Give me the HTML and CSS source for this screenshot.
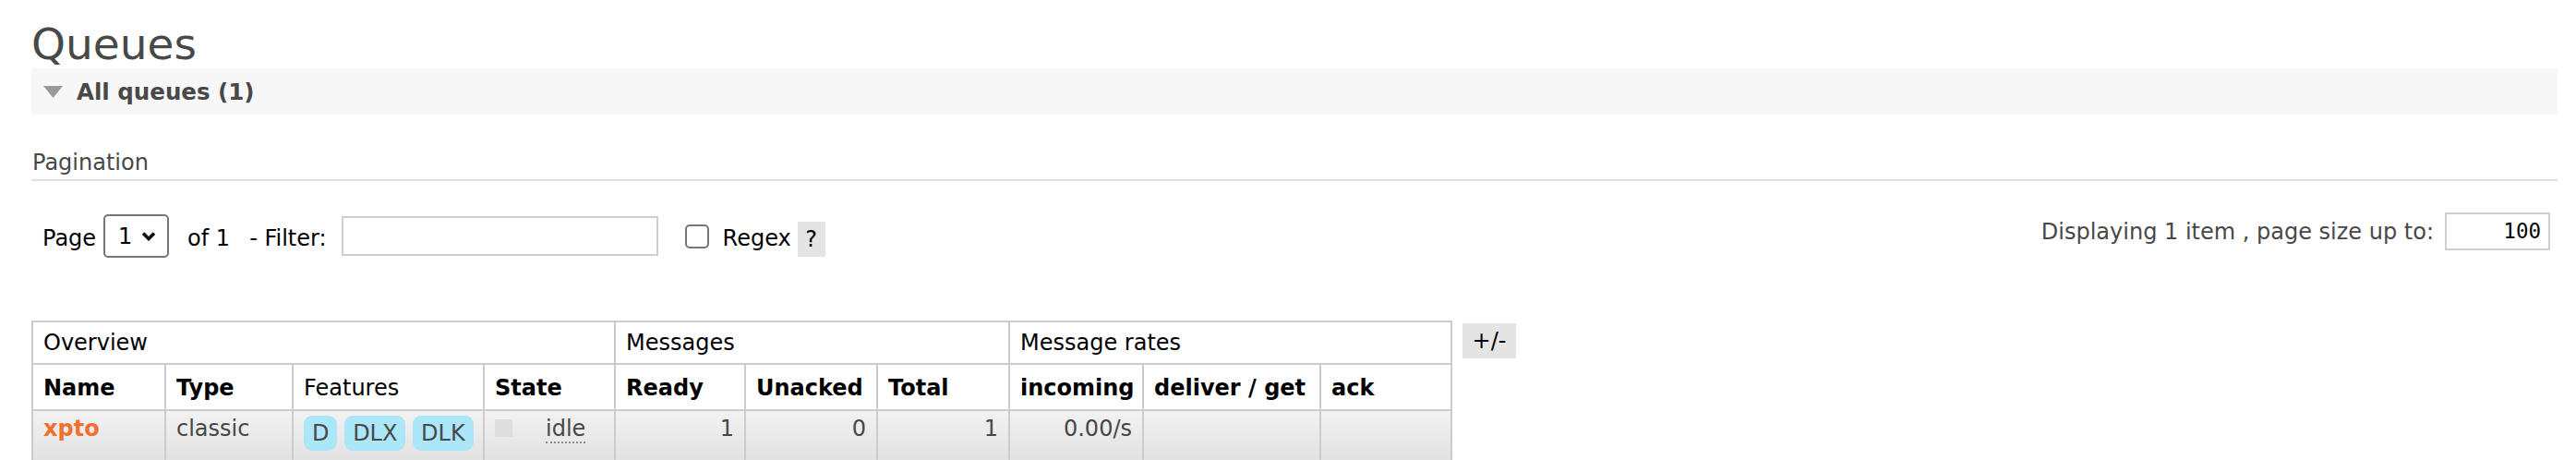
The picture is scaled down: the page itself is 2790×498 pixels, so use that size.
FILE: index.html
```html
<!DOCTYPE html>
<html>
<head>
<meta charset="utf-8">
<link rel="stylesheet" href="styles.css">
</head>
<body>
<h1 class="title">Queues</h1>
<div class="section-head">
  <svg class="tri" width="21" height="13" viewBox="0 0 21 13"><polygon points="0,0 21,0 10.5,13" fill="#999"/></svg>
  <span class="section-title">All queues (1)</span>
</div>
<h3 class="sub">Pagination</h3>
<div class="pager">
  <div class="pager-left">
    <span class="lbl">Page</span>
    <span class="select">1<svg class="chev" width="16" height="11" viewBox="0 0 16 11"><polyline points="2,2.5 8,8.5 14,2.5" fill="none" stroke="#111" stroke-width="3.6"/></svg></span>
    <span class="lbl of">of 1</span>
    <span class="lbl dash">- Filter:</span>
    <span class="filter"></span>
    <span class="check"></span>
    <span class="lbl regex">Regex</span>
    <span class="help">?</span>
  </div>
  <div class="pager-right">
    <span class="disp">Displaying 1 item , page size up to:</span>
    <span class="size">100</span>
  </div>
</div>
<div class="table-wrap">
  <table class="list">
    <colgroup>
      <col class="c-name"><col class="c-type"><col class="c-feat"><col class="c-state">
      <col class="c-ready"><col class="c-unack"><col class="c-total">
      <col class="c-in"><col class="c-del"><col class="c-ack">
    </colgroup>
    <thead>
      <tr class="group">
        <th colspan="4">Overview</th>
        <th colspan="3">Messages</th>
        <th colspan="3">Message rates</th>
      </tr>
      <tr class="cols">
        <th>Name</th><th>Type</th><th class="plain">Features</th><th>State</th>
        <th>Ready</th><th>Unacked</th><th>Total</th>
        <th>incoming</th><th>deliver / get</th><th>ack</th>
      </tr>
    </thead>
    <tbody>
      <tr class="alt">
        <td><a class="qname">xpto</a></td>
        <td>classic</td>
        <td class="feat"><span class="tag">D</span> <span class="tag">DLX</span> <span class="tag">DLK</span></td>
        <td class="state"><span class="sq"></span><abbr class="idle">idle</abbr></td>
        <td class="r">1</td>
        <td class="r">0</td>
        <td class="r">1</td>
        <td class="r">0.00/s</td>
        <td></td>
        <td></td>
      </tr>
    </tbody>
  </table>
  <span class="toggle">+/-</span>
</div>
</body>
</html>
```
FILE: styles.css
```css
html, body {
  margin: 0;
  background: #fff;
}
body {
  padding: 0 20px 0 34px;
  font-family: "DejaVu Sans", Verdana, sans-serif;
  font-size: 24px;
  color: #484848;
}
.title {
  margin: 0;
  padding-top: 22px;
  height: 52px;
  line-height: 52px;
  font-size: 47px;
  font-weight: normal;
  color: #484848;
}
.section-head {
  height: 50px;
  background: #f7f7f7;
  display: flex;
  align-items: center;
  padding-left: 13px;
}
.tri {
  display: block;
  margin-right: 15px;
  margin-top: 1px;
}
.section-title {
  font-weight: bold;
  font-size: 24.5px;
  color: #484848;
}
.sub {
  margin: 39px 0 0 0;
  padding: 0 0 5px 1px;
  font-size: 24px;
  font-weight: normal;
  line-height: 26px;
  border-bottom: 2px solid #e0e0e0;
  color: #484848;
}
.pager {
  display: flex;
  justify-content: space-between;
  align-items: flex-start;
  padding-top: 36px;
}
.pager-left {
  display: flex;
  align-items: center;
  padding-left: 12px;
  color: #000;
}
.lbl {
  line-height: 26px;
  padding-top: 4px;
}
.select {
  display: flex;
  align-items: center;
  box-sizing: border-box;
  width: 71px;
  height: 47px;
  margin-left: 8px;
  border: 2px solid #767676;
  border-radius: 5px;
  padding-left: 14px;
  color: #000;
}
.chev {
  margin-left: 10px;
}
.of {
  margin-left: 20px;
}
.dash {
  margin-left: 21px;
}
.filter {
  box-sizing: border-box;
  width: 343px;
  height: 43px;
  margin-left: 16px;
  border: 2px solid #cfcfcf;
  background: #fff;
}
.check {
  box-sizing: border-box;
  width: 26px;
  height: 26px;
  margin-left: 29px;
  border: 2px solid #767676;
  border-radius: 5px;
}
.regex {
  margin-left: 15px;
}
.help {
  box-sizing: border-box;
  width: 30px;
  height: 38px;
  margin-left: 7px;
  margin-top: 6px;
  background: #e4e4e4;
  text-align: center;
  line-height: 38px;
  color: #000;
}
.pager-right {
  display: flex;
  align-items: center;
  padding-right: 8px;
  margin-top: -2px;
}
.disp {
  color: #484848;
  margin-right: 12px;
}
.size {
  box-sizing: border-box;
  width: 114px;
  height: 41px;
  border: 2px solid #cfcfcf;
  font-family: "DejaVu Sans Mono", monospace;
  font-size: 22.5px;
  line-height: 37px;
  text-align: right;
  padding-right: 8px;
  color: #000;
}
.table-wrap {
  display: flex;
  align-items: flex-start;
  margin-top: 68px;
}
.list {
  border-collapse: collapse;
  table-layout: fixed;
  width: 1537px;
}
.c-name { width: 144px; }
.c-type { width: 138px; }
.c-feat { width: 207px; }
.c-state { width: 142px; }
.c-ready { width: 141px; }
.c-unack { width: 143px; }
.c-total { width: 143px; }
.c-in { width: 145px; }
.c-del { width: 192px; }
.c-ack { width: 142px; }
.list th, .list td {
  border: 2px solid #cccccc;
  padding: 0 11px;
  text-align: left;
  line-height: 26px;
  white-space: nowrap;
  overflow: hidden;
}
.list th {
  color: #000;
  background: #fff;
}
.group th {
  font-weight: normal;
  height: 44px;
  padding-top: 0;
  padding-bottom: 0;
}
.cols th {
  font-weight: bold;
  height: 46px;
  padding-top: 2px;
  padding-bottom: 0;
}
.cols th.plain {
  font-weight: normal;
}
.alt td {
  background: linear-gradient(#f2f2f2, #e2e2e2);
  vertical-align: top;
  padding-top: 6px;
  padding-bottom: 0;
  height: 47px;
}
.list td.feat {
  padding-top: 5px;
}
.list td.r {
  text-align: right;
}
.qname {
  color: #f0702e;
  font-weight: bold;
  text-decoration: none;
}
.tag {
  display: inline-block;
  background: #abe7f9;
  border-radius: 9px;
  padding: 6px 9px;
  line-height: 26px;
  color: #484848;
}
.state .sq {
  display: inline-block;
  width: 19px;
  height: 19px;
  background: #dedede;
  vertical-align: -1px;
  margin-right: 36px;
}
.idle {
  text-decoration: none;
  border-bottom: 2px dotted #888;
}
.toggle {
  margin-left: 11px;
  margin-top: 3px;
  width: 58px;
  height: 38px;
  line-height: 38px;
  text-align: center;
  background: #e4e4e4;
  color: #000;
}
```
